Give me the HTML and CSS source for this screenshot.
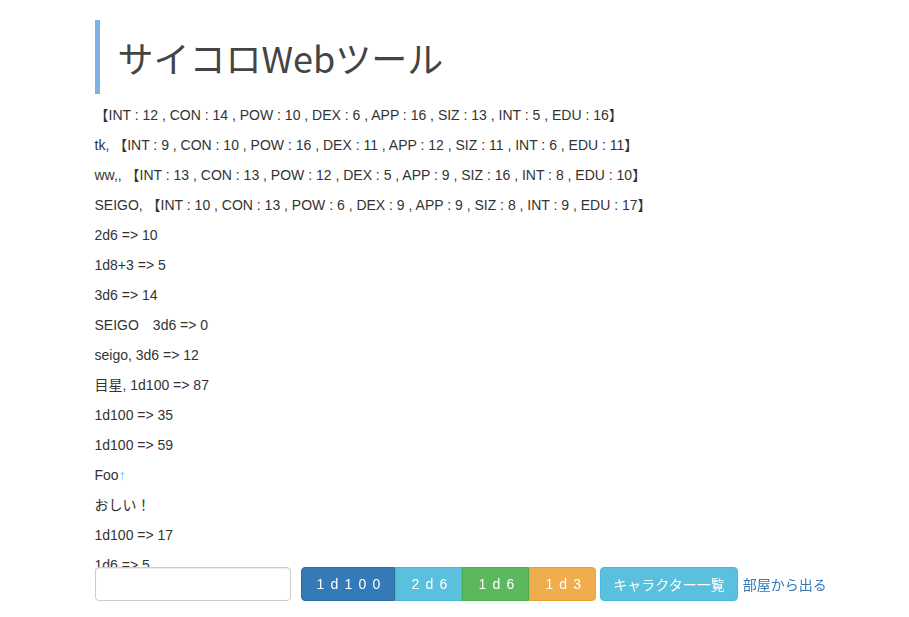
FILE: index.html
```html
<!DOCTYPE html>
<html lang="ja">
<head>
<meta charset="utf-8">
<title>サイコロWebツール</title>
<link rel="stylesheet" href="styles.css">
</head>
<body>
<div class="container">
  <h1 class="title">サイコロWebツール</h1>
  <div class="log">
    <p>【INT : 12 , CON : 14 , POW : 10 , DEX : 6 , APP : 16 , SIZ : 13 , INT : 5 , EDU : 16】</p>
    <p>tk, 【INT : 9 , CON : 10 , POW : 16 , DEX : 11 , APP : 12 , SIZ : 11 , INT : 6 , EDU : 11】</p>
    <p>ww,, 【INT : 13 , CON : 13 , POW : 12 , DEX : 5 , APP : 9 , SIZ : 16 , INT : 8 , EDU : 10】</p>
    <p>SEIGO, 【INT : 10 , CON : 13 , POW : 6 , DEX : 9 , APP : 9 , SIZ : 8 , INT : 9 , EDU : 17】</p>
    <p>2d6 =&gt; 10</p>
    <p>1d8+3 =&gt; 5</p>
    <p>3d6 =&gt; 14</p>
    <p>SEIGO　3d6 =&gt; 0</p>
    <p>seigo, 3d6 =&gt; 12</p>
    <p>目星, 1d100 =&gt; 87</p>
    <p>1d100 =&gt; 35</p>
    <p>1d100 =&gt; 59</p>
    <p>Foo<span class="arrow">↑</span></p>
    <p>おしい！</p>
    <p>1d100 =&gt; 17</p>
    <p>1d6 =&gt; 5</p>
  </div>
</div>
<div class="footer">
  <div class="footer-inner">
    <input class="form-input" type="text">
    <div class="btn-group">
      <button class="btn dice btn-primary">1d100</button>
      <button class="btn dice btn-info">2d6</button>
      <button class="btn dice btn-success">1d6</button>
      <button class="btn dice btn-warning">1d3</button>
    </div>
    <button class="btn btn-info btn-chars">キャラクター一覧</button>
    <a class="leave" href="#">部屋から出る</a>
  </div>
</div>
</body>
</html>
```
FILE: styles.css
```css
html, body {
  margin: 0;
  padding: 0;
  overflow: hidden;
  height: 100%;
}
body {
  font-family: "Liberation Sans", Arial, "Noto Sans CJK JP", sans-serif;
  font-size: 14px;
  line-height: 20px;
  color: #333;
  background: #fff;
}
.container {
  width: 720px;
  padding: 0 15px;
  margin: 0 auto;
}
.title {
  margin: 20px 0 11px;
  padding: 17px 0 17px 18px;
  border-left: 5px solid #7fb2e2;
  font-family: "Noto Sans CJK JP", sans-serif;
  font-weight: 400;
  font-size: 36px;
  line-height: 40px;
  color: #444;
}
.log p {
  margin: 0 0 10px;
  white-space: nowrap;
}
.arrow {
  color: #5bc0de;
}
.footer {
  position: fixed;
  left: 0;
  right: 0;
  bottom: 16px;
}
.footer-inner {
  width: 720px;
  margin: 0 auto;
  display: flex;
  align-items: center;
  white-space: nowrap;
}
.form-input {
  box-sizing: border-box;
  width: 196px;
  height: 34px;
  margin: 0 10px 0 0;
  padding: 6px 12px;
  border: 1px solid #ccc;
  border-radius: 4px;
  background: #fff;
  box-shadow: inset 0 1px 1px rgba(0,0,0,.075);
  font: 14px "Liberation Sans", Arial, sans-serif;
}
.btn-group {
  display: flex;
}
.btn {
  box-sizing: border-box;
  height: 34px;
  border: 1px solid transparent;
  border-radius: 4px;
  color: #fff;
  font-family: "Liberation Sans", Arial, "Noto Sans CJK JP", sans-serif;
  font-size: 14px;
  line-height: 20px;
  padding: 6px 12px;
  cursor: pointer;
}
.dice {
  letter-spacing: 6.2px;
  padding: 6px 8px 6px 15px;
  border-radius: 0;
}
.btn-group .dice:first-child {
  border-radius: 4px 0 0 4px;
}
.btn-group .dice:last-child {
  border-radius: 0 4px 4px 0;
}
.btn-primary { background: #337ab7; border-color: #2e6da4; }
.btn-info { background: #5bc0de; border-color: #46b8da; }
.btn-success { background: #5cb85c; border-color: #4cae4c; }
.btn-warning { background: #f0ad4e; border-color: #eea236; }
.btn-chars {
  margin-left: 4px;
  font-family: "Noto Sans CJK JP", sans-serif;
  font-size: 14px;
  padding: 6px 12px;
}
.leave {
  margin-left: 5px;
  color: #337ab7;
  text-decoration: none;
  font-family: "Noto Sans CJK JP", sans-serif;
}
```
